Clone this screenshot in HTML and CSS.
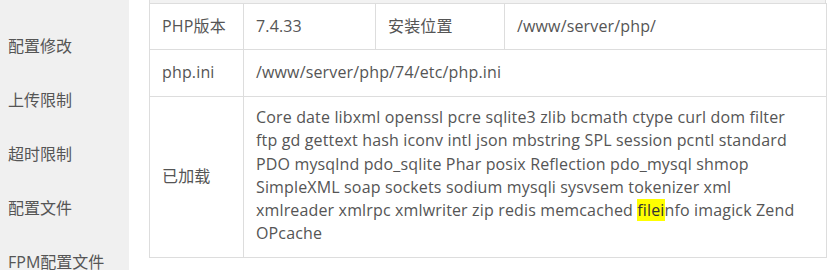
FILE: index.html
```html
<!DOCTYPE html>
<html lang="zh-CN">
<head>
<meta charset="utf-8">
<title>PHP</title>
<link rel="stylesheet" href="styles.css">
</head>
<body>
<div class="layout">
  <ul class="sidebar">
    <li>配置修改</li>
    <li>上传限制</li>
    <li>超时限制</li>
    <li>配置文件</li>
    <li>FPM配置文件</li>
  </ul>
  <div class="main">
    <div class="head-strip"></div>
    <table class="info">
      <colgroup>
        <col class="c1"><col class="c2"><col class="c3"><col class="c4">
      </colgroup>
      <tr class="r1">
        <td>PHP版本</td>
        <td>7.4.33</td>
        <td>安装位置</td>
        <td>/www/server/php/</td>
      </tr>
      <tr class="r2">
        <td>php.ini</td>
        <td colspan="3">/www/server/php/74/etc/php.ini</td>
      </tr>
      <tr class="r3">
        <td>已加载</td>
        <td colspan="3" class="ext">Core date libxml openssl pcre sqlite3 zlib bcmath ctype curl dom filter<br>ftp gd gettext hash iconv intl json mbstring SPL session pcntl standard<br>PDO mysqlnd pdo_sqlite Phar posix Reflection pdo_mysql shmop<br>SimpleXML soap sockets sodium mysqli sysvsem tokenizer xml<br>xmlreader xmlrpc xmlwriter zip redis memcached <span class="hl">filei</span>nfo imagick Zend<br>OPcache</td>
      </tr>
    </table>
  </div>
</div>
</body>
</html>
```
FILE: styles.css
```css
html, body {
  margin: 0;
  padding: 0;
  background: #fff;
}
body {
  font-family: "Open Sans", "Noto Sans CJK SC", sans-serif;
  font-size: 16px;
  color: #555;
  letter-spacing: 0.15px;
}
.layout {
  display: flex;
  height: 270px;
  overflow: hidden;
}
.sidebar {
  width: 129px;
  flex: none;
  margin: 0;
  padding: 19px 0 0 8px;
  box-sizing: border-box;
  background: #f0f0f0;
  list-style: none;
}
.sidebar li {
  height: 54px;
  line-height: 54px;
  letter-spacing: 0;
  color: #555;
}
.main {
  padding-left: 20px;
}
.head-strip {
  width: 677px;
  height: 3px;
  box-sizing: border-box;
  background: #f2f2f2;
  border-left: 1px solid #ddd;
  border-right: 1px solid #ddd;
}
.info {
  border-collapse: collapse;
  table-layout: fixed;
  width: 677px;
}
.c1 { width: 94px; }
.c2 { width: 132px; }
.c3 { width: 129px; }
.c4 { width: 322px; }
.info td {
  border: 1px solid #ddd;
  padding: 0 12px;
  line-height: 23.3px;
  vertical-align: middle;
}
.r1 td { height: 45px; }
.r2 td { height: 46px; }
.info td.ext {
  padding: 9px 12px 11px;
}
.hl {
  background: #ffff00;
  color: #333;
}
```
